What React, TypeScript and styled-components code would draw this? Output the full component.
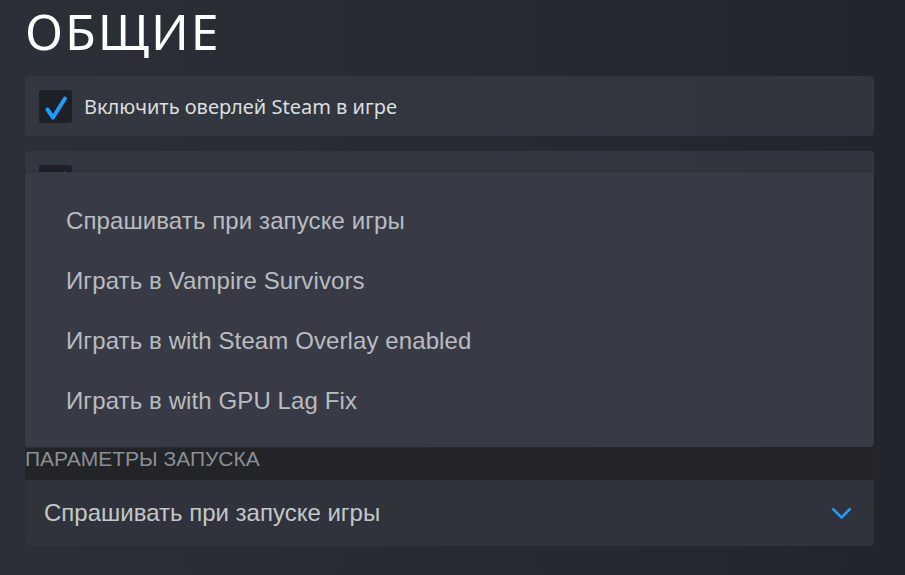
import styled, { createGlobalStyle } from "styled-components";

const GlobalStyle = createGlobalStyle`
  html, body {
    margin: 0;
    padding: 0;
    background: #24262d;
  }
  body {
    font-family: "Noto Sans", "Open Sans", sans-serif;
  }
`;

const Page = styled.div`
  width: 905px;
  height: 575px;
  overflow: hidden;
  background: linear-gradient(90deg, #2b2f37 0%, #282b33 45%, #23252c 100%);
  box-sizing: border-box;
  padding: 6px 31px 0 25px;
`;

const Section = styled.div`
  position: relative;
  display: flex;
  flex-direction: column;
`;

const Title = styled.h1`
  margin: 0 0 20px;
  font-family: "Noto Sans", sans-serif;
  font-weight: 400;
  font-size: 50px;
  line-height: 50px;
  letter-spacing: 2px;
  color: #ffffff;
`;

const Cards = styled.div`
  display: flex;
  flex-direction: column;
  gap: 15px;
`;

const Card = styled.div`
  height: 60px;
  box-sizing: border-box;
  padding: 0 14px;
  display: flex;
  align-items: center;
  gap: 12px;
  border-radius: 4px;
  background: linear-gradient(90deg, #333740 0%, #31353e 100%);
`;

const Box = styled.span`
  width: 33px;
  height: 33px;
  flex: none;
  border-radius: 3px;
  background: #1e2026;
  display: flex;
  align-items: center;
  justify-content: center;
`;

const CardLabel = styled.span`
  font-family: "Noto Sans", sans-serif;
  font-size: 20px;
  color: #dcdedf;
`;

const ParamsLabel = styled.div`
  margin-top: 12px;
  height: 32px;
  background: #222428;
  font-family: "Liberation Sans", Arial, sans-serif;
  font-size: 21px;
  line-height: 21px;
  color: #8b8f96;
`;

const Select = styled.div`
  height: 66px;
  box-sizing: border-box;
  padding: 0 22px 0 19px;
  display: flex;
  align-items: center;
  justify-content: space-between;
  border-radius: 4px;
  background: #30333b;
  font-family: "Liberation Sans", Arial, sans-serif;
  font-size: 24px;
  color: #c4c7ca;
`;

const Menu = styled.div`
  position: absolute;
  top: 166px;
  left: 0;
  right: 0;
  height: 275px;
  box-sizing: border-box;
  padding: 19px 0 16px;
  border-radius: 4px;
  background: #383b45;
  box-shadow: 0 -1px 2px rgba(0, 0, 0, 0.15);
  display: flex;
  flex-direction: column;
`;

const MenuItem = styled.div`
  height: 60px;
  display: flex;
  align-items: center;
  padding-left: 41px;
  font-family: "Liberation Sans", Arial, sans-serif;
  font-size: 24px;
  letter-spacing: 0.1px;
  color: #b9bcc0;
`;

const Check = () => (
  <svg width="33" height="33" viewBox="0 0 33 33">
    <path
      d="M8.5 19.5 L14 27.5 L26 8.5"
      fill="none"
      stroke="#1a9fff"
      strokeWidth="4"
      strokeLinecap="round"
      strokeLinejoin="round"
    />
  </svg>
);

const Chevron = () => (
  <svg width="21" height="13" viewBox="0 0 21 13">
    <path d="M1.5 1.5 L10.5 10.5 L19.5 1.5" fill="none" stroke="#1a9fff" strokeWidth="2.6" />
  </svg>
);

const options = [
  "Спрашивать при запуске игры",
  "Играть в Vampire Survivors",
  "Играть в with Steam Overlay enabled",
  "Играть в with GPU Lag Fix",
];

export default function App() {
  return (
    <>
      <GlobalStyle />
      <Page>
        <Section>
          <Title>ОБЩИЕ</Title>
          <Cards>
            <Card>
              <Box>
                <Check />
              </Box>
              <CardLabel>Включить оверлей Steam в игре</CardLabel>
            </Card>
            <Card>
              <Box>
                <Check />
              </Box>
              <CardLabel>Использовать Desktop Game Theatre</CardLabel>
            </Card>
            <Card />
            <Card />
            <Card />
          </Cards>
          <ParamsLabel>ПАРАМЕТРЫ ЗАПУСКА</ParamsLabel>
          <Select>
            <span>Спрашивать при запуске игры</span>
            <Chevron />
          </Select>
          <Menu>
            {options.map((o) => (
              <MenuItem key={o}>{o}</MenuItem>
            ))}
          </Menu>
        </Section>
      </Page>
    </>
  );
}
